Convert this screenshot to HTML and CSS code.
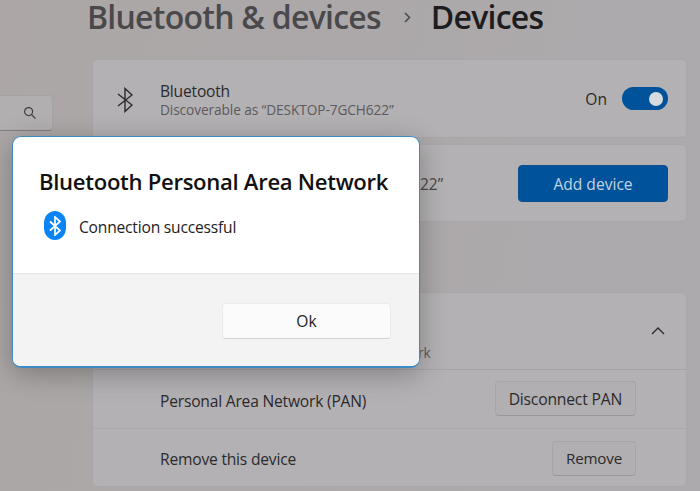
FILE: index.html
```html
<!DOCTYPE html>
<html lang="en">
<head>
    <meta charset="UTF-8">
    <title>Bluetooth &amp; devices</title>
    <link rel="stylesheet" href="styles.css">
</head>
<body>
    <div class="page">
        <div class="sidebar">
            <div class="search">
                <svg width="14" height="14" viewBox="0 0 14 14" fill="none" stroke="#3f3d40" stroke-width="1.2">
                    <circle cx="5.6" cy="5.6" r="4"/>
                    <path d="M8.5 8.500l4 4.200"/>
                </svg>
            </div>
        </div>
        <div class="main">
            <div class="breadcrumb">
                <span class="crumb">Bluetooth &amp; devices</span>
                <svg class="crumb-sep" width="7" height="11" viewBox="0 0 7 11" fill="none" stroke="#4a484b" stroke-width="1.5">
                    <path d="M1 1l4.500 4.500-4.500 4.500"/>
                </svg>
                <span class="crumb-current">Devices</span>
            </div>

            <div class="card row">
                <svg class="row-icon" width="16" height="26" viewBox="0 0 16 26" fill="none" stroke="#2b2a2c" stroke-width="1.4">
                    <path d="M1 7l14 11-7 6.500V1.500l7 6.500L1 19"/>
                </svg>
                <div class="row-text">
                    <div class="row-title">Bluetooth</div>
                    <div class="row-sub">Discoverable as “DESKTOP-7GCH622”</div>
                </div>
                <span class="state">On</span>
                <div class="toggle"><span class="knob"></span></div>
            </div>

            <div class="card row second">
                <div class="row-text">
                    <div class="row-name">22”</div>
                </div>
                <button class="btn-primary">Add device</button>
            </div>

            <div class="card third">
                <div class="row head">
                    <div class="row-text">
                        <div class="row-sub">rk</div>
                    </div>
                    <svg width="14" height="8" viewBox="0 0 14 8" fill="none" stroke="#2b2a2c" stroke-width="1.4">
                        <path d="M1 7l6-6 6 6"/>
                    </svg>
                </div>
                <div class="row sub-row">
                    <div class="row-label">Personal Area Network (PAN)</div>
                    <button class="btn">Disconnect PAN</button>
                </div>
                <div class="row sub-row">
                    <div class="row-label">Remove this device</div>
                    <button class="btn">Remove</button>
                </div>
            </div>
        </div>
    </div>

    <div class="dialog">
        <div class="dialog-body">
            <div class="dialog-title">Bluetooth Personal Area Network</div>
            <div class="dialog-msg">
                <div class="bt-badge">
                    <svg width="12" height="20" viewBox="0 0 12 20" fill="none" stroke="#fff" stroke-width="1.7">
                        <path d="M1 5.500l10 9-5 4.500V1l5 4.500-10 9"/>
                    </svg>
                </div>
                <span class="msg-text">Connection successful</span>
            </div>
        </div>
        <div class="dialog-foot">
            <button class="btn-ok">Ok</button>
        </div>
    </div>
</body>
</html>
```

FILE: styles.css
```css
* {
    box-sizing: border-box;
}

html, body {
    height: 100%;
}

body {
    margin: 0;
    overflow: hidden;
    font-family: 'Open Sans', 'Noto Sans', sans-serif;
    background: linear-gradient(100deg, #aca7a6 0%, #aca8a9 40%, #adaaae 100%);
    color: #2b2a2c;
}

button {
    font-family: inherit;
}

.page {
    display: flex;
    height: 491px;
}

.sidebar {
    width: 92px;
    flex-shrink: 0;
    padding-top: 95px;
}

.search {
    width: 53px;
    height: 36px;
    display: flex;
    align-items: center;
    justify-content: flex-end;
    padding-right: 15px;
    background: #b2afb1;
    border: 1px solid #a5a2a5;
    border-bottom-color: #7f7d80;
    border-left: 0;
    border-radius: 0 4px 4px 0;
}

.main {
    flex: 1;
    padding-right: 13px;
}

.breadcrumb {
    height: 59px;
    display: flex;
    align-items: center;
    margin-left: -5px;
    padding-bottom: 25px;
}

.crumb {
    font-size: 32px;
    font-weight: 600;
    line-height: 34px;
    letter-spacing: -0.75px;
    color: #4a484b;
}

.crumb-sep {
    margin: 0 20px 0 23px;
}

.crumb-current {
    font-size: 32px;
    font-weight: 600;
    line-height: 34px;
    letter-spacing: -0.75px;
    color: #1d1c1e;
}

.card {
    background: #b3b1b3;
    border: 1px solid #a8a6a8;
    border-radius: 5px;
}

.row {
    display: flex;
    align-items: center;
}

.card.row {
    height: 79px;
    padding: 2px 18px 0 24px;
}

.card.second {
    height: 78px;
    margin-top: 6px;
    padding: 0 18px 0 327px;
}

.card.third {
    margin-top: 70px;
    height: 195px;
}

.row-icon {
    margin-right: 27px;
}

.row-text {
    flex: 1;
}

.row-title, .row-label {
    font-size: 15.6px;
    letter-spacing: -0.2px;
    line-height: 20px;
    color: #2b2a2c;
}

.row-label {
    padding-top: 3px;
}

.sub-row:last-child .row-label {
    padding-top: 1px;
}

.row-sub {
    font-size: 13.7px;
    letter-spacing: -0.1px;
    line-height: 18px;
    color: #5c5a5d;
}

.head .row-sub {
    padding: 43px 0 0 258px;
    line-height: 20px;
    height: 63px;
}

.row-name {
    font-size: 15.5px;
    line-height: 18px;
    padding-top: 2px;
    color: #4a484b;
}

.state {
    font-size: 15.6px;
    margin: -2px 15px 0 0;
    color: #2b2a2c;
}

.toggle {
    width: 46px;
    height: 23px;
    margin-top: -2px;
    padding: 0 5px;
    display: flex;
    align-items: center;
    justify-content: flex-end;
    background: #00539b;
    border-radius: 12px;
}

.knob {
    width: 14px;
    height: 14px;
    border-radius: 50%;
    background: #d7dadd;
}

.btn-primary {
    width: 150px;
    height: 37px;
    padding-top: 2px;
    font-size: 15.6px;
    color: #c4d3e3;
    background: #00539b;
    border: 1px solid #0a4f8e;
    border-radius: 4px;
}

.head {
    height: 77px;
    padding: 0 21px 0 67px;
    border-bottom: 1px solid #a6a4a6;
}

.sub-row {
    height: 59px;
    padding: 0 50px 0 67px;
    justify-content: space-between;
    border-bottom: 1px solid #aaa8aa;
}

.sub-row:last-child {
    border-bottom: 0;
}

.btn {
    height: 35px;
    margin-top: -1px;
    padding: 0 13px;
    font-size: 15.7px;
    letter-spacing: -0.2px;
    color: #2b2a2c;
    background: #b1afb1;
    border: 1px solid #a6a4a6;
    border-bottom-color: #999799;
    border-radius: 4px;
}

.sub-row:last-child .btn {
    font-size: 15.2px;
}

/* dialog sits over the settings page */
.dialog {
    position: absolute;
    left: 12px;
    top: 136px;
    width: 408px;
    height: 232px;
    display: flex;
    flex-direction: column;
    background: #fff;
    border: 1px solid #3e8bc4;
    border-bottom-width: 2px;
    border-radius: 9px;
    overflow: hidden;
    box-shadow: 0 6px 28px rgba(0, 0, 0, 0.28);
}

.dialog-body {
    height: 136px;
    padding: 28px 0 0 26px;
}

.dialog-title {
    font-size: 22.1px;
    font-weight: 600;
    line-height: 32px;
    letter-spacing: -0.3px;
    color: #111;
}

.dialog-msg {
    display: flex;
    align-items: center;
    gap: 13px;
    margin-top: 14px;
    padding-left: 5px;
    font-size: 15.6px;
    letter-spacing: -0.2px;
    color: #222;
}

.msg-text {
    padding-top: 2px;
}

.bt-badge {
    width: 22px;
    height: 29px;
    display: flex;
    align-items: center;
    justify-content: center;
    background: #0a84f5;
    border-radius: 11px / 12px;
}

.dialog-foot {
    flex: 1;
    display: flex;
    justify-content: flex-end;
    padding: 29px 28px 0 0;
    background: #f3f3f3;
    border-top: 1px solid #e6e6e6;
}

.btn-ok {
    width: 169px;
    height: 36px;
    font-size: 15.6px;
    color: #222;
    background: #fbfbfb;
    border: 1px solid #ececec;
    border-bottom-color: #d4d4d4;
    border-radius: 4px;
}
```
